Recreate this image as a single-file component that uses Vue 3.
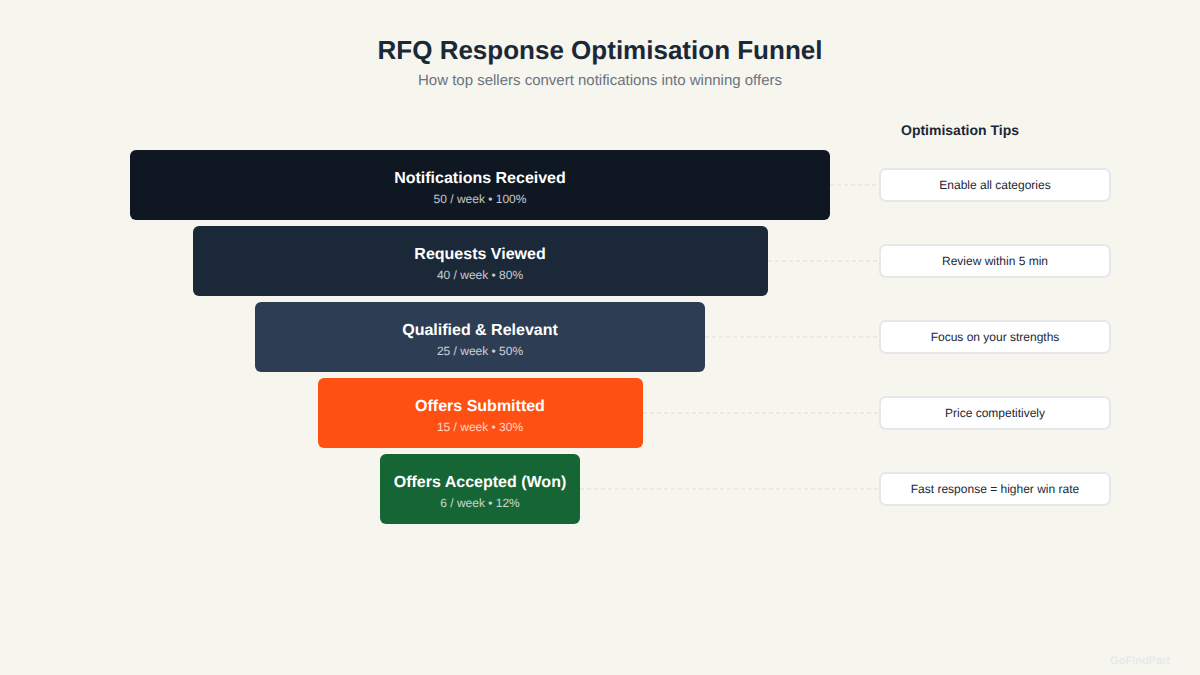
<template>
  <div class="page">
    <header class="head">
      <h1>RFQ Response Optimisation Funnel</h1>
      <p>How top sellers convert notifications into winning offers</p>
    </header>

    <h2 class="tips-title">Optimisation Tips</h2>

    <section class="funnel">
      <div v-for="stage in stages" :key="stage.name" class="row">
        <div
          class="bar"
          :style="{ width: stage.width + 'px', marginLeft: (700 - stage.width) / 2 + 'px', background: stage.color }"
        >
          <div class="bar-name">{{ stage.name }}</div>
          <div class="bar-stat">{{ stage.stat }}</div>
        </div>
        <div class="link"></div>
        <div class="tip">{{ stage.tip }}</div>
      </div>
    </section>

    <footer class="brand">GoFindPart</footer>
  </div>
</template>

<script setup>
const stages = [
  { name: "Notifications Received", stat: "50 / week • 100%", tip: "Enable all categories", width: 700, color: "#0f1722" },
  { name: "Requests Viewed", stat: "40 / week • 80%", tip: "Review within 5 min", width: 575, color: "#1b2838" },
  { name: "Qualified & Relevant", stat: "25 / week • 50%", tip: "Focus on your strengths", width: 450, color: "#2d3e54" },
  { name: "Offers Submitted", stat: "15 / week • 30%", tip: "Price competitively", width: 325, color: "#ff5014" },
  { name: "Offers Accepted (Won)", stat: "6 / week • 12%", tip: "Fast response = higher win rate", width: 200, color: "#166534" },
];
</script>

<style scoped>
.page {
  width: 1200px;
  height: 675px;
  box-sizing: border-box;
  padding-top: 32px;
  background: #f6f6ee;
  font-family: "Liberation Sans", Arial, sans-serif;
  text-rendering: geometricPrecision;
  display: flex;
  flex-direction: column;
  overflow: hidden;
}

.head {
  text-align: center;
}

.head h1 {
  margin: 0;
  font-size: 26px;
  line-height: 36px;
  font-weight: 700;
  color: #1b2838;
}

.head p {
  margin: 4px 0 0;
  font-size: 15px;
  line-height: 18px;
  color: #6b7280;
}

.tips-title {
  margin: 31px 0 0 780px;
  width: 360px;
  text-align: center;
  font-size: 14px;
  line-height: 18px;
  font-weight: 700;
  color: #1b2838;
}

.funnel {
  margin-top: 11px;
  padding-left: 130px;
  display: flex;
  flex-direction: column;
  gap: 6px;
}

.row {
  width: 981px;
  height: 70px;
  display: flex;
  align-items: center;
}

.bar {
  height: 70px;
  flex: none;
  box-sizing: border-box;
  padding-top: 6px;
  border-radius: 6px;
  display: flex;
  flex-direction: column;
  align-items: center;
  justify-content: center;
  color: #fff;
}

.bar-name {
  font-size: 16px;
  line-height: 20px;
  font-weight: 700;
  white-space: nowrap;
}

.bar-stat {
  margin-top: 1px;
  font-size: 12px;
  line-height: 18px;
  opacity: 0.75;
  white-space: nowrap;
}

.link {
  flex: 1;
  height: 2px;
  background: repeating-linear-gradient(90deg, #e9e9e6 0 4px, transparent 4px 7px);
}

.tip {
  width: 232px;
  height: 34px;
  flex: none;
  box-sizing: border-box;
  border: 2px solid #e5e7eb;
  border-radius: 7px;
  background: #fff;
  display: flex;
  align-items: center;
  justify-content: center;
  font-size: 12px;
  line-height: 14px;
  color: #1b2838;
}

.brand {
  margin-top: auto;
  padding: 0 30px 7px 0;
  text-align: right;
  font-size: 11px;
  line-height: 14px;
  font-weight: 700;
  color: #e8e9ee;
}
</style>
